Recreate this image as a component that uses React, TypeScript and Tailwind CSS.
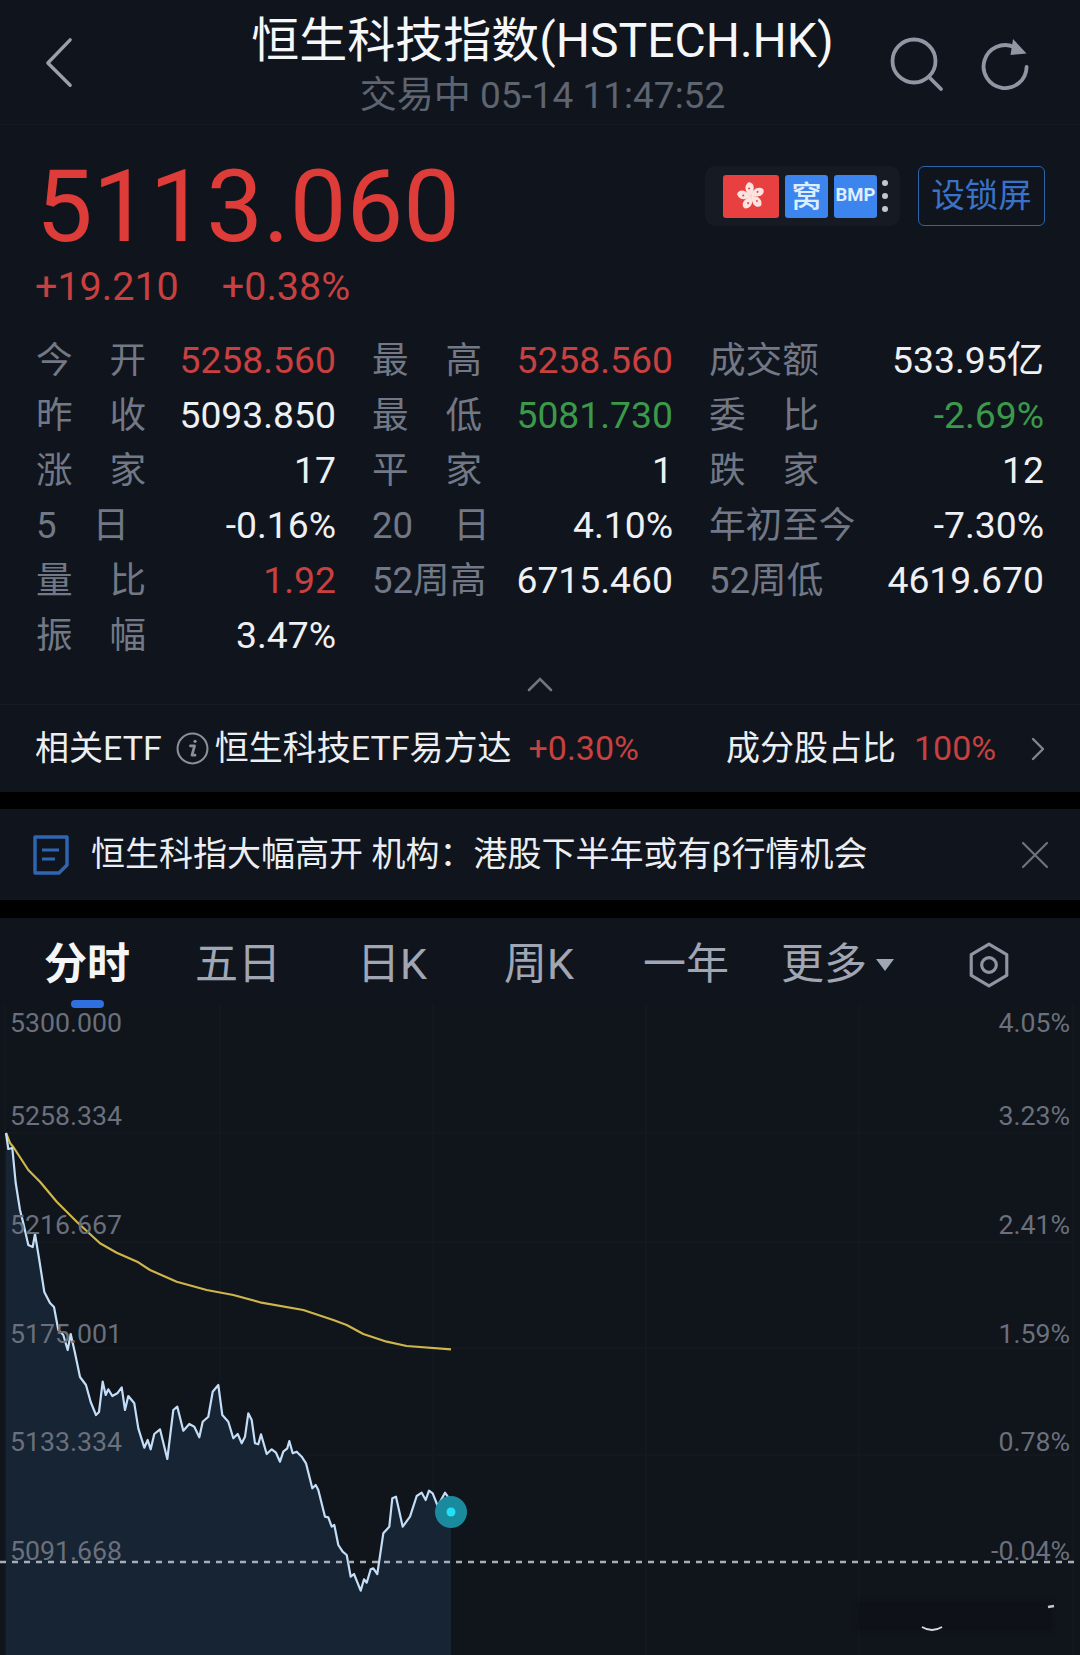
import React from "react";

const priceLine =
  "6,1133 8.3,1149 12.3,1148 15.7,1183 20,1210 23.3,1223 28.3,1245 32.7,1247 35,1234 39.3,1260 44.3,1292 50,1303 54,1307 58.3,1330 63.3,1335 67.7,1350 70.7,1334 75,1353 80,1377 86,1385 90.7,1402 96,1415 99,1412 102.7,1381.7 105.7,1395 108.3,1389.3 112.3,1396 117.3,1393.3 121.7,1387.3 125,1410 128.3,1396 134.3,1403.3 138.3,1428.3 144.3,1447.7 147.7,1440 150.7,1449.3 154.3,1434 160,1429.3 167.3,1459 173.3,1410 177.3,1406.7 183.3,1430.7 189.3,1424 194.3,1426.7 199.3,1437.3 202.7,1421.7 208.3,1416.7 212.7,1391.7 218.3,1385 222.3,1415 228.3,1421.7 233.3,1438.3 237.7,1434 241.7,1443.3 245,1436.7 248.3,1413.3 251.7,1420 255,1443.3 258.3,1444.3 261,1434.3 266.7,1454 271.7,1449.3 276,1452.7 280,1461.7 283.3,1451.7 287.3,1448.3 289.3,1441 292.7,1453.3 296.7,1451.7 301.7,1456.7 306,1463.3 312.3,1488.3 315.7,1485 318.3,1490 325,1516.7 328.3,1517.3 331.7,1526.7 334.3,1525 338.3,1545 342.7,1551.7 346.7,1555 350.7,1576.7 354,1574 360.7,1590.7 364,1579.3 366.7,1582.7 370.7,1569.3 373.3,1568.3 377.3,1574 383.3,1533.3 389.3,1526.7 392.3,1498.3 396,1496.7 402.7,1526.7 410,1516.7 416.7,1496 421.7,1492.7 425.7,1500 429,1490.7 432.7,1493.3 437.7,1506 445,1492.7 448.3,1497.3 451,1511.7";

const avgLine =
  "6,1133 10,1143 14,1148 28.3,1170 40,1181.7 56.7,1201.7 76.7,1221.7 100,1243.3 116.7,1252.7 138.3,1262.3 150,1270 176.7,1281.7 206.7,1290 233.3,1295 260,1302.3 303.3,1310 333.3,1320 346.7,1325 363.3,1334 386.7,1341.7 406.7,1346 451,1349.3";

type Cell = {
  label: React.ReactNode;
  value?: string;
  color?: string;
};

const red = "text-[#c8403f]";
const green = "text-[#3a9a4a]";
const white = "text-[#eef0f4]";

const rows: Cell[][] = [
  [
    { label: <Spread a="今" b="开" />, value: "5258.560", color: red },
    { label: <Spread a="最" b="高" />, value: "5258.560", color: red },
    { label: "成交额", value: "533.95亿", color: white },
  ],
  [
    { label: <Spread a="昨" b="收" />, value: "5093.850", color: white },
    { label: <Spread a="最" b="低" />, value: "5081.730", color: green },
    { label: <Spread a="委" b="比" />, value: "-2.69%", color: green },
  ],
  [
    { label: <Spread a="涨" b="家" />, value: "17", color: white },
    { label: <Spread a="平" b="家" />, value: "1", color: white },
    { label: <Spread a="跌" b="家" />, value: "12", color: white },
  ],
  [
    { label: <span>5<span className="ml-[36px]">日</span></span>, value: "-0.16%", color: white },
    { label: <span>20<span className="ml-[40px]">日</span></span>, value: "4.10%", color: white },
    { label: "年初至今", value: "-7.30%", color: white },
  ],
  [
    { label: <Spread a="量" b="比" />, value: "1.92", color: red },
    { label: "52周高", value: "6715.460", color: white },
    { label: "52周低", value: "4619.670", color: white },
  ],
  [{ label: <Spread a="振" b="幅" />, value: "3.47%", color: white }],
];

function Spread({ a, b }: { a: string; b: string }) {
  return (
    <span className="flex w-[110px] justify-between">
      <span>{a}</span>
      <span>{b}</span>
    </span>
  );
}

function Flag() {
  return (
    <svg viewBox="-12 -12 24 24" className="h-[30px] w-[30px]">
      {[0, 72, 144, 216, 288].map((r) => (
        <g key={r} transform={`rotate(${r})`}>
          <path d="M0 0C-5 -3 -6 -8 -2 -11C2 -11 4 -7 0 0Z" fill="#fbe4e0" />
          <circle cx="-1.5" cy="-6" r="0.8" fill="#e84040" />
        </g>
      ))}
    </svg>
  );
}

const yLabels = [
  { left: "5300.000", right: "4.05%", cls: "top-[3px]" },
  { left: "5258.334", right: "3.23%", cls: "top-[96px]" },
  { left: "5216.667", right: "2.41%", cls: "top-[205px]" },
  { left: "5175.001", right: "1.59%", cls: "top-[314px]" },
  { left: "5133.334", right: "0.78%", cls: "top-[422px]" },
  { left: "5091.668", right: "-0.04%", cls: "top-[531px]" },
];

export default function App() {
  return (
    <div className="flex h-[1655px] w-[1080px] flex-col overflow-hidden bg-black font-['Roboto','Noto_Sans_CJK_SC',sans-serif]">
      {/* header */}
      <header className="flex h-[125px] shrink-0 items-start border-b border-[#141a22] bg-[#10151d]">
        <div className="w-[253px] shrink-0 pl-[44px] pt-[37px]">
          <svg viewBox="0 0 32 56" className="h-[52px] w-[30px]" fill="none" stroke="#9aa0ab" strokeWidth="3.6" strokeLinecap="round" strokeLinejoin="round">
            <path d="M28 3L4 28L28 52" />
          </svg>
        </div>
        <div className="flex w-[579px] shrink-0 flex-col items-center">
          <div className="mt-[11px] whitespace-nowrap text-[48px] leading-[60px] text-[#f6f7f9]">恒生科技指数(HSTECH.HK)</div>
          <div className="mt-[3px] whitespace-nowrap text-[37px] leading-[44px] text-[#5e6470]">交易中 05-14 11:47:52</div>
        </div>
        <div className="ml-[58px] mt-[37px] flex items-center gap-[36px]">
          <svg viewBox="0 0 54 54" className="h-[54px] w-[54px]" fill="none" stroke="#9096a3" strokeWidth="3.8" strokeLinecap="round">
            <circle cx="24" cy="24" r="21.5" />
            <path d="M39 40L51 52" />
          </svg>
          <svg viewBox="0 0 50 52" className="h-[52px] w-[50px]" fill="none" stroke="#9096a3" strokeWidth="3.8">
            <path d="M34 9A21.5 21.5 0 1 0 46.6 29" strokeLinecap="round" />
            <path d="M33 1L46.5 15.5L30.5 17Z" fill="#9096a3" stroke="none" />
          </svg>
        </div>
      </header>

      {/* price */}
      <section className="flex h-[208px] shrink-0 flex-col bg-[#10151d]">
        <div className="flex items-start justify-between pl-[36px] pr-[35px]">
          <div className="mt-[34px] text-[101px] leading-[96px] text-[#dd3c39]">5113.060</div>
          <div className="mt-[41px] flex items-start gap-[18px]">
            <div className="flex h-[60px] w-[195px] items-center rounded-[10px] bg-[#161b23] pl-[18px]">
              <div className="flex h-[43px] w-[56px] items-center justify-center rounded-[3px] bg-[#e84040]">
                <Flag />
              </div>
              <div className="ml-[6px] flex h-[43px] w-[43px] items-center justify-center rounded-[3px] bg-[#3c84ee] text-[30px] font-medium text-[#dfeeff]">窝</div>
              <div className="ml-[6px] flex h-[43px] w-[43px] items-center justify-center rounded-[3px] bg-[#3c84ee] text-[18.5px] font-bold text-[#dfeeff]">BMP</div>
              <div className="ml-[5px] flex flex-col gap-[7px]">
                <div className="h-[6px] w-[6px] rounded-full bg-[#c4c6ca]" />
                <div className="h-[6px] w-[6px] rounded-full bg-[#c4c6ca]" />
                <div className="h-[6px] w-[6px] rounded-full bg-[#c4c6ca]" />
              </div>
            </div>
            <div className="flex h-[60px] w-[127px] items-center justify-center rounded-[6px] border border-[#2b64a8] text-[33.5px] text-[#3a72c8]">设锁屏</div>
          </div>
        </div>
        <div className="mt-[10px] flex pl-[35px] text-[39.5px] leading-[44px] text-[#c8403f]">
          <span>+19.210</span>
          <span className="ml-[43px]">+0.38%</span>
        </div>
      </section>

      {/* stats */}
      <section className="flex h-[371px] shrink-0 flex-col bg-[#10151d] pl-[36px]">
        {rows.map((row, i) => (
          <div key={i} className="grid h-[55px] shrink-0 grid-cols-[300px_301px_335px] gap-x-[36px] text-[37.3px] leading-[55px]">
            {row.map((c, j) => (
              <div key={j} className="flex items-center justify-between">
                <span className="text-[36.6px] text-[#727885]">{c.label}</span>
                <span className={c.color}>{c.value}</span>
              </div>
            ))}
          </div>
        ))}
        <div className="flex h-[41px] items-center pl-[491px]">
          <svg viewBox="0 0 26 16" className="h-[16px] w-[26px]" fill="none" stroke="#6f7581" strokeWidth="2.6" strokeLinecap="round">
            <path d="M2 14L13 3L24 14" />
          </svg>
        </div>
      </section>

      {/* related ETF */}
      <section className="flex h-[88px] shrink-0 items-center border-t border-[#171c25] bg-[#10151d] pl-[35px] text-[34px] text-[#eceef2]">
        <span>相关ETF</span>
        <svg viewBox="0 0 32 32" className="ml-[14px] h-[33px] w-[33px]" fill="none" stroke="#8b8f98">
          <circle cx="16" cy="16" r="14.5" strokeWidth="2" />
          <path d="M14 13.5H18L15.5 22.5H18.5" strokeWidth="2.6" strokeLinecap="round" strokeLinejoin="round" />
          <circle cx="18.5" cy="9" r="1.6" fill="#8b8f98" stroke="none" />
        </svg>
        <span className="ml-[6px]">恒生科技ETF易方达</span>
        <span className="ml-[17px] text-[#c8403f]">+0.30%</span>
        <span className="ml-[87px]">成分股占比</span>
        <span className="ml-[18px] text-[#c8403f]">100%</span>
        <svg viewBox="0 0 14 24" className="ml-[35px] h-[24px] w-[14px]" fill="none" stroke="#80858f" strokeWidth="2.4" strokeLinecap="round" strokeLinejoin="round">
          <path d="M2 2L12 12L2 22" />
        </svg>
      </section>

      {/* news */}
      <section className="mt-[17px] flex h-[91px] shrink-0 items-center bg-[#10151d] pl-[33px] text-[34px] text-[#eceef2]">
        <svg viewBox="0 0 36 40" className="h-[40px] w-[36px]" fill="none" stroke="#2f66b4" strokeWidth="3.4">
          <path d="M2 2H34V30L26 38H2Z" strokeLinejoin="round" />
          <path d="M9 15H26M9 24H22" strokeWidth="2.8" />
        </svg>
        <span className="ml-[22px]">恒生科指大幅高开 机构：港股下半年或有β行情机会</span>
        <svg viewBox="0 0 28 28" className="ml-auto mr-[31px] h-[28px] w-[28px]" fill="none" stroke="#6d727d" strokeWidth="2.2" strokeLinecap="round">
          <path d="M2 2L26 26M26 2L2 26" />
        </svg>
      </section>

      {/* tabs */}
      <nav className="relative z-10 mt-[18px] flex h-[87px] shrink-0 items-center bg-[#10151d] pl-[44px] pt-[6px] text-[43px] text-[#a0a6b4]">
        <span className="font-bold text-[#f4f5f7]">分时</span>
        <span className="ml-[65px]">五日</span>
        <span className="ml-[76px]">日K</span>
        <span className="ml-[77px]">周K</span>
        <span className="ml-[69px]">一年</span>
        <span className="ml-[52px]">更多</span>
        <svg viewBox="0 0 20 14" className="ml-[8px] h-[14px] w-[20px]" fill="#a0a6b4">
          <path d="M1 1H19L10 13Z" />
        </svg>
        <svg viewBox="0 0 38 44" className="ml-[74px] h-[46px] w-[40px]" fill="none" stroke="#8f95a2" strokeWidth="3">
          <path d="M19 2L36 12V32L19 42L2 32V12Z" strokeLinejoin="round" />
          <circle cx="19" cy="22" r="7" />
        </svg>
        <div className="absolute bottom-[-3px] left-[71px] h-[8px] w-[33px] rounded-full bg-[#2f6fe0]" />
      </nav>

      {/* chart */}
      <section className="relative flex-1 bg-[#10141b]">
        <svg viewBox="0 1005 1080 650" className="h-[650px] w-[1080px]" fill="none">
          {[5, 220, 433, 646, 859, 1073].map((x) => (
            <path key={x} d={`M${x} 1005V1655`} stroke="#141920" strokeWidth="1.5" />
          ))}
          {[1133, 1242, 1348, 1455].map((y) => (
            <path key={y} d={`M5 ${y}H1075`} stroke="#141920" strokeWidth="1.5" />
          ))}
          <polygon points={`6,1655 ${priceLine} 451,1655`} fill="#162433" />
          <polyline points={avgLine} stroke="#cfb64c" strokeWidth="2.2" strokeLinejoin="round" />
          <polyline points={priceLine} stroke="#c4def8" strokeWidth="2.2" strokeLinejoin="round" />
          <path d="M0 1562H1075" stroke="#a9adb5" strokeWidth="2.4" strokeDasharray="6 6" />
          <circle cx="451" cy="1512" r="16" fill="#1a8a9f" />
          <circle cx="451" cy="1512" r="4.5" fill="#22e0f5" />
          <path d="M858 1602H1052V1630H858Z" fill="#0e1117" className="blur-[2px]" />
          <path d="M922 1627Q932 1633 942 1627" stroke="#d8dade" strokeWidth="2" />
          <path d="M1048 1607L1054 1606" stroke="#c8cacc" strokeWidth="2.5" />
        </svg>
        {yLabels.map((l) => (
          <div key={l.left} className={`absolute left-[10px] right-[10px] flex justify-between text-[26.7px] leading-[30px] text-[#6a707c] ${l.cls}`}>
            <span>{l.left}</span>
            <span>{l.right}</span>
          </div>
        ))}
      </section>
    </div>
  );
}
